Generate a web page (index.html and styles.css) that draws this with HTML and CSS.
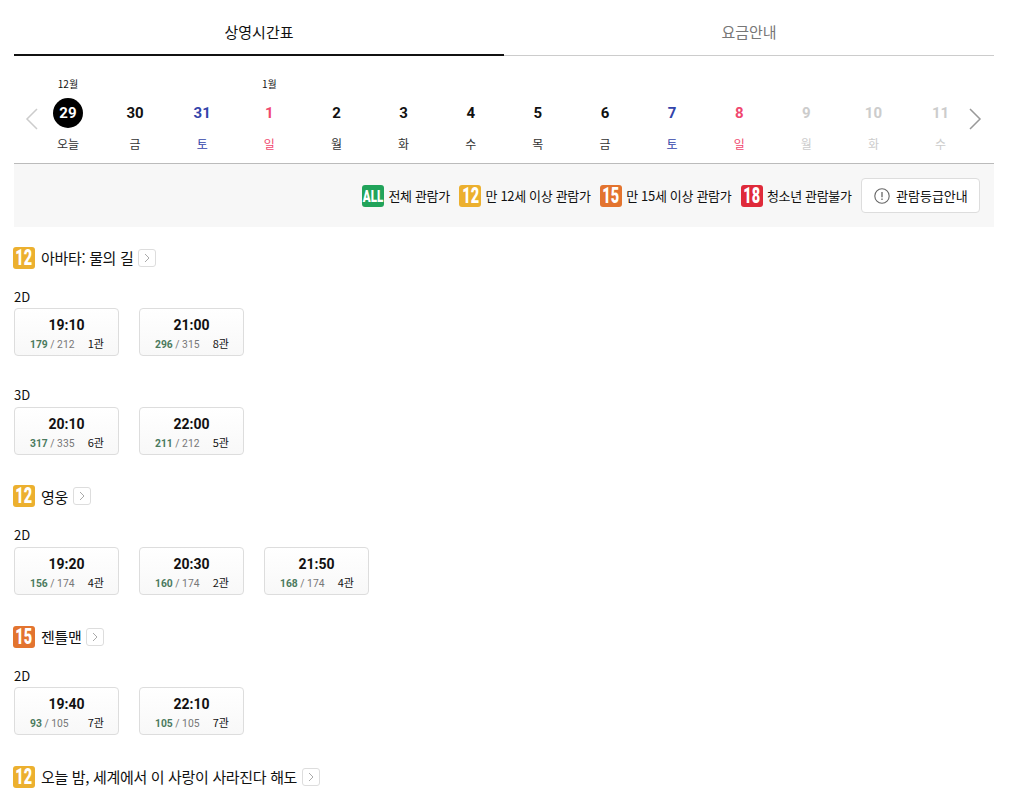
FILE: index.html
```html
<!DOCTYPE html>
<html lang="ko">
<head>
    <title>상영시간표</title>
    <link rel="stylesheet" href="styles.css">
</head>
<body>
    <div class="tabs">
        <div class="tab active">상영시간표</div>
        <div class="tab">요금안내</div>
    </div>

    <div class="date-bar">
        <svg class="date-arrow" width="14" height="22" viewBox="0 0 14 22"><path d="M12 1 2 11l10 10" fill="none" stroke="#ccc" stroke-width="1.5"/></svg>
        <ul class="date-list">
            <li class="date-item"><span class="month">12월</span><span class="num today">29</span><span class="day">오늘</span></li>
            <li class="date-item"><span class="num">30</span><span class="day">금</span></li>
            <li class="date-item sat"><span class="num">31</span><span class="day">토</span></li>
            <li class="date-item sun"><span class="month">1월</span><span class="num">1</span><span class="day">일</span></li>
            <li class="date-item"><span class="num">2</span><span class="day">월</span></li>
            <li class="date-item"><span class="num">3</span><span class="day">화</span></li>
            <li class="date-item"><span class="num">4</span><span class="day">수</span></li>
            <li class="date-item"><span class="num">5</span><span class="day">목</span></li>
            <li class="date-item"><span class="num">6</span><span class="day">금</span></li>
            <li class="date-item sat"><span class="num">7</span><span class="day">토</span></li>
            <li class="date-item sun"><span class="num">8</span><span class="day">일</span></li>
            <li class="date-item off"><span class="num">9</span><span class="day">월</span></li>
            <li class="date-item off"><span class="num">10</span><span class="day">화</span></li>
            <li class="date-item off"><span class="num">11</span><span class="day">수</span></li>
        </ul>
        <svg class="date-arrow" width="14" height="22" viewBox="0 0 14 22"><path d="M2 1l10 10L2 21" fill="none" stroke="#999" stroke-width="1.5"/></svg>
    </div>

    <div class="rating-bar">
        <span class="rating"><i class="badge all"><span>ALL</span></i>전체 관람가</span>
        <span class="rating"><i class="badge age12"><span>12</span></i>만 12세 이상 관람가</span>
        <span class="rating"><i class="badge age15"><span>15</span></i>만 15세 이상 관람가</span>
        <span class="rating"><i class="badge age18"><span>18</span></i>청소년 관람불가</span>
        <button class="rating-btn">
            <svg width="16" height="16" viewBox="0 0 16 16"><circle cx="8" cy="8" r="7.2" fill="none" stroke="#666" stroke-width="1.1"/><path d="M8 4v5.2M8 10.6v1.3" stroke="#666" stroke-width="1.3"/></svg>
            관람등급안내
        </button>
    </div>

    <section class="movie">
        <h3 class="movie-title"><i class="badge age12"><span>12</span></i>아바타: 물의 길<span class="more"><svg width="6" height="10" viewBox="0 0 6 10"><path d="M1 1l4 4-4 4" fill="none" stroke="#aaa"/></svg></span></h3>
        <div class="screen">
            <div class="format">2D</div>
            <div class="times">
                <a class="time"><b>19:10</b><span class="info"><span class="seats"><em>179</em> / 212</span><span class="hall">1관</span></span></a>
                <a class="time"><b>21:00</b><span class="info"><span class="seats"><em>296</em> / 315</span><span class="hall">8관</span></span></a>
            </div>
        </div>
        <div class="screen">
            <div class="format">3D</div>
            <div class="times">
                <a class="time"><b>20:10</b><span class="info"><span class="seats"><em>317</em> / 335</span><span class="hall">6관</span></span></a>
                <a class="time"><b>22:00</b><span class="info"><span class="seats"><em>211</em> / 212</span><span class="hall">5관</span></span></a>
            </div>
        </div>
    </section>

    <section class="movie">
        <h3 class="movie-title"><i class="badge age12"><span>12</span></i>영웅<span class="more"><svg width="6" height="10" viewBox="0 0 6 10"><path d="M1 1l4 4-4 4" fill="none" stroke="#aaa"/></svg></span></h3>
        <div class="screen">
            <div class="format">2D</div>
            <div class="times">
                <a class="time"><b>19:20</b><span class="info"><span class="seats"><em>156</em> / 174</span><span class="hall">4관</span></span></a>
                <a class="time"><b>20:30</b><span class="info"><span class="seats"><em>160</em> / 174</span><span class="hall">2관</span></span></a>
                <a class="time"><b>21:50</b><span class="info"><span class="seats"><em>168</em> / 174</span><span class="hall">4관</span></span></a>
            </div>
        </div>
    </section>

    <section class="movie">
        <h3 class="movie-title"><i class="badge age15"><span>15</span></i>젠틀맨<span class="more"><svg width="6" height="10" viewBox="0 0 6 10"><path d="M1 1l4 4-4 4" fill="none" stroke="#aaa"/></svg></span></h3>
        <div class="screen">
            <div class="format">2D</div>
            <div class="times">
                <a class="time"><b>19:40</b><span class="info"><span class="seats"><em>93</em> / 105</span><span class="hall">7관</span></span></a>
                <a class="time"><b>22:10</b><span class="info"><span class="seats"><em>105</em> / 105</span><span class="hall">7관</span></span></a>
            </div>
        </div>
    </section>

    <section class="movie">
        <h3 class="movie-title"><i class="badge age12"><span>12</span></i>오늘 밤, 세계에서 이 사랑이 사라진다 해도<span class="more"><svg width="6" height="10" viewBox="0 0 6 10"><path d="M1 1l4 4-4 4" fill="none" stroke="#aaa"/></svg></span></h3>
    </section>
</body>
</html>
```

FILE: styles.css
```css
html {
    overflow: hidden;
}

body {
    font-family: "Noto Sans CJK KR", "Noto Sans", sans-serif;
    margin: 0;
    padding: 0 17px 0 14px;
    background: #fff;
    color: #111;
    font-size: 12px;
}

ul {
    list-style: none;
    margin: 0;
    padding: 0;
}

/* Tabs */
.tabs {
    display: flex;
}

.tab {
    flex: 1;
    height: 55px;
    line-height: 63px;
    text-align: center;
    font-size: 15px;
    color: #777;
    border-bottom: 1px solid #ccc;
}

.tab.active {
    height: 54px;
    color: #111;
    border-bottom: 2px solid #111;
}

/* Dates */
.date-bar {
    display: flex;
    align-items: center;
    height: 107px;
    padding: 0 12px 0 11px;
    border-bottom: 1px solid #bbb;
}

.date-arrow {
    flex: none;
    margin-top: 19px;
}

.date-list {
    flex: 1;
    display: flex;
    margin: 0 -6.2px 0 -4.6px;
    height: 107px;
}

.date-item {
    flex: 1;
    position: relative;
    display: flex;
    flex-direction: column;
    align-items: center;
    padding-top: 42px;
}

.month {
    position: absolute;
    top: 20px;
    font-size: 10px;
    line-height: 16px;
}

.num {
    width: 30px;
    height: 30px;
    line-height: 30px;
    text-align: center;
    font-family: Roboto, sans-serif;
    font-size: 15px;
    font-weight: 700;
}

.num.today {
    background: #000;
    color: #fff;
    border-radius: 50%;
}

.day {
    margin-top: 7px;
    line-height: 18px;
    font-size: 12px;
    color: #333;
}

.sat .num, .sat .day {
    color: #3344aa;
}

.sun .num, .sun .day {
    color: #f0476f;
}

.off .num, .off .day {
    color: #ccc;
}

/* Ratings */
.rating-bar {
    display: flex;
    align-items: center;
    justify-content: flex-end;
    gap: 9.4px;
    height: 63px;
    padding: 0 14px;
    background: #f7f7f7;
}

.rating {
    display: flex;
    align-items: center;
    gap: 4.2px;
    font-size: 13px;
    letter-spacing: -0.33px;
}

.badge {
    flex: none;
    display: flex;
    justify-content: center;
    width: 22px;
    height: 22px;
    border-radius: 3px;
    font-family: Roboto, sans-serif;
    font-style: normal;
    font-size: 22px;
    line-height: 22px;
    font-weight: 900;
    letter-spacing: 0;
    color: #fff;
}

.badge span {
    display: block;
    transform: scaleX(0.66);
}

.badge.all {
    font-size: 17px;
    background: #21a35a;
}

.badge.all span {
    transform: scaleX(0.68);
}

.badge.age12 {
    background: #ecb02f;
}

.badge.age15 {
    background: #e3742f;
}

.badge.age18 {
    background: #df2a3a;
}

.rating-btn {
    display: flex;
    align-items: center;
    gap: 6px;
    width: 119px;
    height: 35px;
    padding: 0 0 0 12px;
    white-space: nowrap;
    background: #fff;
    border: 1px solid #ddd;
    border-radius: 4px;
    font: inherit;
    font-size: 13px;
    color: #111;
}

/* Movies */
.movie-title {
    display: flex;
    align-items: center;
    gap: 5px;
    height: 22px;
    margin: 0 0 0 -1px;
    font-size: 15px;
    letter-spacing: -0.33px;
    font-weight: 400;
}

.movie-title .badge {
    margin-right: 1px;
}

.movie {
    margin-top: 30.49px;
}

.rating-bar + .movie {
    margin-top: 19.6px;
}

.more {
    display: flex;
    align-items: center;
    justify-content: center;
    width: 18px;
    height: 18px;
    box-sizing: border-box;
    border: 1px solid #ddd;
    border-radius: 3px;
}

.screen {
    margin-top: 19px;
}

.screen + .screen {
    margin-top: 30.2px;
}

.format {
    line-height: 17px;
    font-size: 13px;
    margin-bottom: 3.6px;
}

.times {
    display: flex;
    gap: 20px;
}

.time {
    box-sizing: border-box;
    width: 105px;
    height: 48px;
    padding-top: 6px;
    border: 1px solid #ddd;
    border-radius: 4px;
    background: linear-gradient(#fff, #f8f8f8);
    text-align: center;
}

.time b {
    display: block;
    margin-bottom: 1px;
    font-family: Roboto, sans-serif;
    font-size: 14px;
    line-height: 20px;
}

.info {
    display: flex;
    justify-content: space-between;
    align-items: baseline;
    padding: 0 14px 0 15px;
    font-size: 11px;
    line-height: 15px;
}

.seats {
    font-family: Roboto, sans-serif;
    font-size: 10.3px;
    color: #777;
}

.seats em {
    font-style: normal;
    font-weight: 700;
    color: #4b7a5e;
}
```
